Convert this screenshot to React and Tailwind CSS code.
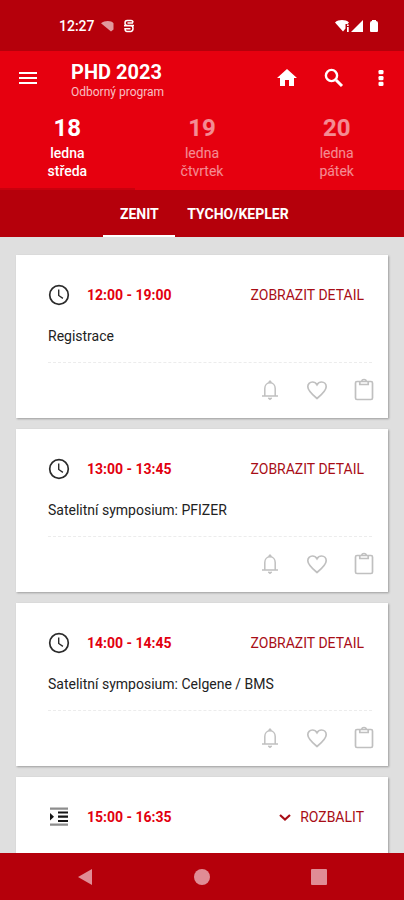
import { useState } from "react";
import clsx from "clsx";
import { MdHome, MdMenu } from "react-icons/md";

const days = [
  { day: "18", month: "ledna", name: "středa" },
  { day: "19", month: "ledna", name: "čtvrtek" },
  { day: "20", month: "ledna", name: "pátek" },
];

const halls = ["ZENIT", "TYCHO/KEPLER"];

const sessions = [
  { time: "12:00 - 19:00", title: "Registrace" },
  { time: "13:00 - 13:45", title: "Satelitní symposium: PFIZER" },
  { time: "14:00 - 14:45", title: "Satelitní symposium: Celgene / BMS" },
  { time: "15:00 - 16:35", group: true },
];

function SearchIcon() {
  return (
    <svg className="size-6" viewBox="0 0 24 24" fill="none" stroke="currentColor" strokeWidth="2.4">
      <circle cx="9.500" cy="9.500" r="5.600" />
      <path d="M14 14l6 6" strokeWidth="3" />
    </svg>
  );
}

function MoreIcon() {
  return (
    <svg className="size-6" viewBox="0 0 24 24" fill="currentColor">
      <rect x="9.500" y="4" width="5" height="4.300" rx="1.300" />
      <rect x="9.500" y="9.900" width="5" height="4.300" rx="1.300" />
      <rect x="9.500" y="15.800" width="5" height="4.300" rx="1.300" />
    </svg>
  );
}

function ClockIcon() {
  return (
    <svg className="size-[22px]" viewBox="0 0 22 22" fill="none" stroke="#2b2b2b" strokeWidth="1.7">
      <circle cx="11" cy="11" r="9.300" />
      <path d="M10.700 5.500v6l4.200 2.800" strokeWidth="1.400" />
    </svg>
  );
}

function GroupIcon() {
  return (
    <svg className="size-[22px]" viewBox="0 0 22 22">
      <path d="M2 1.500h18v2.300H2zM2 17.500h18v2.300H2z" fill="#8d8d8d" />
      <path d="M10 5.500h10v2H10zM10 9.500h10v2.200H10zM10 14h10v2H10zM2 7l4 3.700-4 3.700z" fill="#151515" />
    </svg>
  );
}

function ChevronIcon() {
  return (
    <svg className="h-[7px] w-3" viewBox="0 0 12 7" fill="none" stroke="currentColor" strokeWidth="2.200">
      <path d="M1 1l5 4.500L11 1" />
    </svg>
  );
}

function BellIcon() {
  return (
    <svg className="size-6" viewBox="0 0 24 24" fill="none" stroke="currentColor" strokeWidth="1.5">
      <path d="M4 18h16M6.800 18V10.500C6.800 7.200 9 4.800 12 4.800s5.200 2.400 5.200 5.700V18" />
      <path d="M10.500 4.800 12 3.200l1.500 1.600M10.300 19.800 12 21.200l1.700-1.400" />
    </svg>
  );
}

function HeartIcon() {
  return (
    <svg className="size-6" viewBox="0 0 24 24" fill="none" stroke="currentColor" strokeWidth="1.7">
      <path d="M12 20.500C6 15.500 2.800 12.300 2.800 8.700 2.800 6 4.800 4 7.400 4c1.900 0 3.600 1 4.600 2.700C13 5 14.700 4 16.600 4c2.600 0 4.600 2 4.600 4.700 0 3.600-3.200 6.800-9.200 11.800z" />
    </svg>
  );
}

function ClipboardIcon() {
  return (
    <svg className="size-6" viewBox="0 0 24 24" fill="none" stroke="currentColor" strokeWidth="1.7">
      <rect x="3.500" y="3.500" width="17" height="18" rx="1.500" />
      <path d="M7.800 3.500v3h8.400v-3M9.800 3.500c0-2.700 4.400-2.700 4.400 0" />
    </svg>
  );
}

function StatusBar() {
  return (
    <div className="flex h-[51px] shrink-0 items-center bg-[#b5000b] pr-6 pl-[59px] text-white">
      <span className="text-sm font-medium">12:27</span>
      <svg className="ml-1.5 h-3 w-[14px] opacity-60" viewBox="0 0 14 12" fill="currentColor">
        <path d="M0 3.200C3.600.2 10.400.2 12.500 3.200V9.500L10 11.500z" />
      </svg>
      <svg className="ml-2 h-[14px] w-3" viewBox="0 0 12 14" fill="none" stroke="currentColor" strokeWidth="1.500">
        <path d="M10 3.500Q10 1.500 8 1.500H4.200Q2 1.500 2 4T4.200 6.500H11M1 6.800H8Q10 6.800 10 9.500T8 12.500H4Q2 12.500 2 9.800H7.500M4.500 4H10" />
      </svg>
      <svg className="ml-auto h-[14px] w-[45px]" viewBox="0 0 45 14" fill="currentColor">
        <path d="M0 3.500C3.500.3 10.500.3 14 3.500L12.500 5H10.500V9.500L8 12.500z" />
        <path d="M12 5.500h1.700v1.500H12zM12 8h1.700v5H12z" />
        <path d="M28 1v12H16z" />
        <path d="M35 4Q35 2 37 2V1h4v1q2 0 2 2v8q0 1-1 1h-6q-1 0-1-1z" />
      </svg>
    </div>
  );
}

function SessionCard({ session }) {
  return (
    <li className="bg-white pt-7 pr-3 pb-4 pl-8 shadow-[1px_1px_2px_rgba(0,0,0,0.3)]">
      <div className="flex h-6 items-center pr-3">
        {session.group ? <GroupIcon /> : <ClockIcon />}
        <span className="ml-[17px] text-sm font-bold text-[#e2000f]">{session.time}</span>
        <button type="button" className="ml-auto flex items-center gap-[9px] text-sm text-[#a80d16]">
          {session.group && <ChevronIcon />}
          {session.group ? "ROZBALIT" : "ZOBRAZIT DETAIL"}
        </button>
      </div>
      <p className="mt-[19px] min-h-5 text-sm text-[#222]">{session.title}</p>
      <div className="mt-4 mr-1 border-t border-dashed border-[#ececec]" />
      <div className="mt-[15px] flex justify-end gap-[23px] text-[#c0c0c0]">
        <button type="button" aria-label="Upozornit">
          <BellIcon />
        </button>
        <button type="button" aria-label="Oblíbené">
          <HeartIcon />
        </button>
        <button type="button" aria-label="Poznámka">
          <ClipboardIcon />
        </button>
      </div>
    </li>
  );
}

export default function App() {
  const [activeDay, setActiveDay] = useState(0);
  const [activeHall, setActiveHall] = useState(0);

  return (
    <div className="flex h-screen flex-col bg-[#dfdfdf] font-[Roboto,sans-serif]">
      <StatusBar />

      <header className="shrink-0 bg-[#e6000f] text-white">
        <div className="flex h-[54px] items-center pr-[11px] pl-4">
          <button type="button" aria-label="Menu">
            <MdMenu size={24} />
          </button>
          <div className="ml-[31px] pt-1">
            <h1 className="text-xl leading-6 font-bold">PHD 2023</h1>
            <p className="text-xs text-white/75">Odborný program</p>
          </div>
          <button type="button" aria-label="Domů" className="ml-auto">
            <MdHome size={24} />
          </button>
          <button type="button" aria-label="Hledat" className="ml-[23px]">
            <SearchIcon />
          </button>
          <button type="button" aria-label="Další" className="ml-[23px]">
            <MoreIcon />
          </button>
        </div>
        <nav className="grid grid-cols-3">
          {days.map((d, i) => (
            <button
              key={d.name}
              type="button"
              onClick={() => setActiveDay(i)}
              className={clsx(
                "flex flex-col items-center border-b-2 pt-[9px] pb-2 text-sm leading-[18px]",
                i === activeDay ? "border-[#c9000d] font-medium text-white" : "border-transparent text-white/55"
              )}
            >
              <span className="mb-0.5 text-2xl leading-7 font-bold">{d.day}</span>
              <span>{d.month}</span>
              <span>{d.name}</span>
            </button>
          ))}
        </nav>
      </header>

      <nav className="flex h-[47px] shrink-0 justify-center bg-[#b5000b] text-white">
        {halls.map((hall, i) => (
          <button
            key={hall}
            type="button"
            onClick={() => setActiveHall(i)}
            className={clsx(
              "min-w-[72px] border-y-2 border-t-transparent px-3 text-sm font-bold",
              i === activeHall ? "border-b-white" : "border-b-transparent"
            )}
          >
            {hall}
          </button>
        ))}
      </nav>

      <main className="min-h-0 flex-1 overflow-y-auto px-4 pt-[18px] [scrollbar-width:none]">
        <ul className="flex flex-col gap-[11px]">
          {sessions.map((s) => (
            <SessionCard key={s.time} session={s} />
          ))}
        </ul>
      </main>

      <footer className="flex h-[47px] shrink-0 items-center justify-center gap-[101px] bg-[#b5000b] text-[#e08c95]">
        <button type="button" aria-label="Zpět">
          <svg className="size-4" viewBox="0 0 16 16" fill="currentColor">
            <path d="M15 0v16L1 8z" />
          </svg>
        </button>
        <button type="button" aria-label="Domovská obrazovka" className="size-4 rounded-full bg-current" />
        <button type="button" aria-label="Přehled" className="size-4 rounded-[1px] bg-current" />
      </footer>
    </div>
  );
}
